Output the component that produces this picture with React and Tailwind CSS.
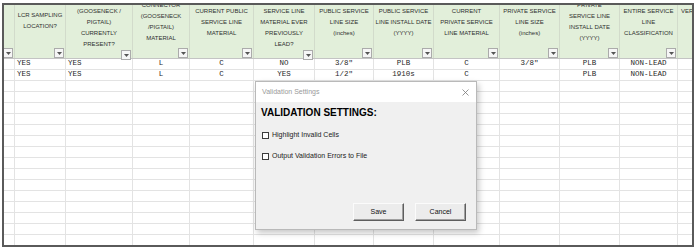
import React from "react";

// column widths line up with the sheet's grid lines
const columns = [
  { w: "w-[11px]", lines: [], pad: "pt-[5px]" },
  { w: "w-[51px]", lines: ["LCR SAMPLING", "LOCATION?"], pad: "pt-[5px]" },
  { w: "w-[67px]", lines: ["(GOOSENECK /", "PIGTAIL)", "CURRENTLY", "PRESENT?"], pad: "pt-[1px]" },
  { w: "w-[57px]", lines: ["CONNECTOR", "(GOOSENECK", "/PIGTAIL)", "MATERIAL"], pad: "-mt-[5px]" },
  { w: "w-[64px]", lines: ["CURRENT PUBLIC", "SERVICE LINE", "MATERIAL"], pad: "pt-[1px]" },
  { w: "w-[61px]", lines: ["SERVICE LINE", "MATERIAL EVER", "PREVIOUSLY", "LEAD?"], pad: "pt-[1px]" },
  { w: "w-[59px]", lines: ["PUBLIC SERVICE", "LINE SIZE", "(inches)"], pad: "pt-[1px]" },
  { w: "w-[60px]", lines: ["PUBLIC SERVICE", "LINE INSTALL DATE", "(YYYY)"], pad: "pt-[1px]" },
  { w: "w-[66px]", lines: ["CURRENT", "PRIVATE SERVICE", "LINE MATERIAL"], pad: "pt-[1px]" },
  { w: "w-[60px]", lines: ["PRIVATE SERVICE", "LINE SIZE", "(inches)"], pad: "pt-[1px]" },
  { w: "w-[60px]", lines: ["PRIVATE", "SERVICE LINE", "INSTALL DATE", "(YYYY)"], pad: "-mt-[5px]" },
  { w: "w-[58px]", lines: ["ENTIRE SERVICE", "LINE", "CLASSIFICATION"], pad: "pt-[1px]" },
];

const rows = [
  ["", "YES", "YES", "L", "C", "NO", '3/8"', "PLB", "C", '3/8"', "PLB", "NON-LEAD"],
  ["", "YES", "YES", "L", "C", "YES", '1/2"', "1910s", "C", "", "PLB", "NON-LEAD"],
];

function FilterButton() {
  return (
    <div className="w-[10px] h-[10px] border border-[#ababab] bg-[#f6f6f6] flex items-center justify-center">
      <svg width="5" height="3" viewBox="0 0 5 3">
        <path d="M0 0h5L2.5 3z" fill="#555" />
      </svg>
    </div>
  );
}

function Header() {
  return (
    <div className="flex h-[54px] bg-[#e2efda] border-b border-[#c4c4c4] shrink-0">
      {columns.map((col, i) => (
        <div
          key={i}
          className={`${col.w} shrink-0 h-full flex flex-col border-r border-[#d2dbcb]`}
        >
          <div
            className={`${col.pad} flex flex-col items-center text-[6px] leading-[11px] text-[#2f2f2f] whitespace-nowrap`}
          >
            {col.lines.map((l, j) => (
              <span key={j}>{l}</span>
            ))}
          </div>
          <div className="mt-auto self-end mr-[1px]">
            <FilterButton />
          </div>
        </div>
      ))}
      <div className="w-[40px] shrink-0 h-full pl-[3px] pt-[1px] text-[6px] leading-[11px] text-[#2f2f2f] whitespace-nowrap">
        VERIFIED
      </div>
    </div>
  );
}

function Row({ cells }) {
  return (
    <div className="flex h-[11px] shrink-0 border-b border-[#e3e3e3]">
      {columns.map((col, i) => (
        <div
          key={i}
          className={`${col.w} shrink-0 h-full border-r border-[#e3e3e3] flex items-center ${
            i === 1 || i === 2 ? "justify-start pl-[2px]" : "justify-center"
          } font-['Liberation_Mono',monospace] text-[7.5px] text-[#1f1f1f] whitespace-nowrap`}
        >
          {cells ? cells[i] : ""}
        </div>
      ))}
      <div className="w-[40px] shrink-0 h-full" />
    </div>
  );
}

function Checkbox({ label }) {
  return (
    <div className="flex items-center h-[8px]">
      <div className="w-[7px] h-[7px] border border-[#3c3c3c] bg-white" />
      <span className="ml-[3px] text-[7px] text-[#1a1a1a] leading-[8px]">{label}</span>
    </div>
  );
}

function DialogButton({ children }) {
  return (
    <div className="w-[51px] h-[18px] bg-[#ececec] border border-t-[#fbfbfb] border-l-[#fbfbfb] border-b-[#5e5e5e] border-r-[#5e5e5e] shadow-[inset_-1px_-1px_0_#a0a0a0] flex items-center justify-center text-[7px] text-[#111]">
      {children}
    </div>
  );
}

function ValidationDialog() {
  return (
    <div className="absolute left-[251px] top-[76px] w-[222px] h-[149px] border border-[#b9b9b9] bg-[#f0f0f0] flex flex-col shadow-[2px_3px_6px_rgba(0,0,0,0.22)]">
      <div className="h-[20px] bg-white flex items-center justify-between pl-[6px] pr-[7px] shrink-0">
        <span className="text-[7px] text-[#9a9a9a]">Validation Settings</span>
        <svg width="7" height="7" viewBox="0 0 7 7">
          <path d="M0.5 0.5l6 6M6.5 0.5l-6 6" stroke="#7a7a7a" strokeWidth="0.8" />
        </svg>
      </div>
      <div className="flex-1 flex flex-col pl-[5px]">
        <div className="mt-[5px] h-[12px] leading-[12px] text-[10px] font-bold text-black">
          VALIDATION SETTINGS:
        </div>
        <div className="mt-[12px] pl-[1px]">
          <Checkbox label="Highlight Invalid Cells" />
        </div>
        <div className="mt-[13px] pl-[1px]">
          <Checkbox label="Output Validation Errors to File" />
        </div>
        <div className="mt-auto mb-[8px] flex justify-end gap-[11px] pr-[10px]">
          <DialogButton>Save</DialogButton>
          <DialogButton>Cancel</DialogButton>
        </div>
      </div>
    </div>
  );
}

export default function App() {
  return (
    <div className="w-[699px] h-[252px] bg-white pt-[3px] pl-[2px] font-['Liberation_Sans',Arial,sans-serif]">
      <div className="relative w-[692px] h-[244px] border-2 border-[#5a5a5a] overflow-hidden bg-white flex flex-col">
        <Header />
        {Array.from({ length: 18 }).map((_, i) => (
          <Row key={i} cells={rows[i]} />
        ))}
        <ValidationDialog />
      </div>
    </div>
  );
}
